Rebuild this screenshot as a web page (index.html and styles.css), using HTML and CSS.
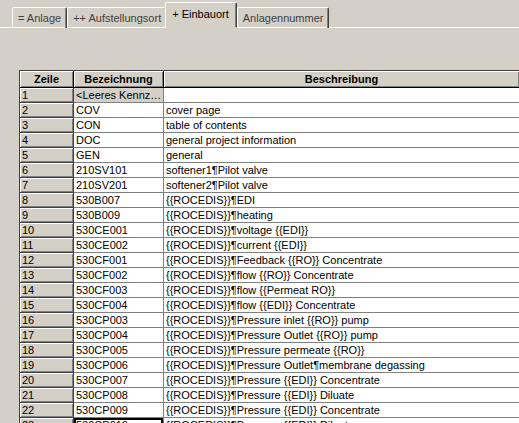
FILE: index.html
```html
<!DOCTYPE html>
<html lang="de">
<head>
  <meta charset="UTF-8">
  <title>Einbauort</title>
  <link rel="stylesheet" href="styles.css">
</head>
<body>

  <div class="tabs">
    <div class="tab">= Anlage</div>
    <div class="tab">++ Aufstellungsort</div>
    <div class="tab active">+ Einbauort</div>
    <div class="tab">Anlagennummer</div>
  </div>

  <div class="panel">
    <table class="grid">
      <colgroup>
        <col class="c-num">
        <col class="c-code">
        <col class="c-desc">
      </colgroup>
      <thead>
        <tr>
          <th>Zeile</th>
          <th>Bezeichnung</th>
          <th>Beschreibung</th>
        </tr>
      </thead>
      <tbody>
        <tr><td class="num">1</td><td class="empty">&lt;Leeres Kennz…</td><td></td></tr>
        <tr><td class="num">2</td><td>COV</td><td>cover page</td></tr>
        <tr><td class="num">3</td><td>CON</td><td>table of contents</td></tr>
        <tr><td class="num">4</td><td>DOC</td><td>general project information</td></tr>
        <tr><td class="num">5</td><td>GEN</td><td>general</td></tr>
        <tr><td class="num">6</td><td>210SV101</td><td>softener1¶Pilot valve</td></tr>
        <tr><td class="num">7</td><td>210SV201</td><td>softener2¶Pilot valve</td></tr>
        <tr><td class="num">8</td><td>530B007</td><td>{{ROCEDIS}}¶EDI</td></tr>
        <tr><td class="num">9</td><td>530B009</td><td>{{ROCEDIS}}¶heating</td></tr>
        <tr><td class="num">10</td><td>530CE001</td><td>{{ROCEDIS}}¶voltage {{EDI}}</td></tr>
        <tr><td class="num">11</td><td>530CE002</td><td>{{ROCEDIS}}¶current {{EDI}}</td></tr>
        <tr><td class="num">12</td><td>530CF001</td><td>{{ROCEDIS}}¶Feedback {{RO}} Concentrate</td></tr>
        <tr><td class="num">13</td><td>530CF002</td><td>{{ROCEDIS}}¶flow {{RO}} Concentrate</td></tr>
        <tr><td class="num">14</td><td>530CF003</td><td>{{ROCEDIS}}¶flow {{Permeat RO}}</td></tr>
        <tr><td class="num">15</td><td>530CF004</td><td>{{ROCEDIS}}¶flow {{EDI}} Concentrate</td></tr>
        <tr><td class="num">16</td><td>530CP003</td><td>{{ROCEDIS}}¶Pressure inlet {{RO}} pump</td></tr>
        <tr><td class="num">17</td><td>530CP004</td><td>{{ROCEDIS}}¶Pressure Outlet {{RO}} pump</td></tr>
        <tr><td class="num">18</td><td>530CP005</td><td>{{ROCEDIS}}¶Pressure permeate {{RO}}</td></tr>
        <tr><td class="num">19</td><td>530CP006</td><td>{{ROCEDIS}}¶Pressure Outlet¶membrane degassing</td></tr>
        <tr><td class="num">20</td><td>530CP007</td><td>{{ROCEDIS}}¶Pressure {{EDI}} Concentrate</td></tr>
        <tr><td class="num">21</td><td>530CP008</td><td>{{ROCEDIS}}¶Pressure {{EDI}} Diluate</td></tr>
        <tr><td class="num">22</td><td>530CP009</td><td>{{ROCEDIS}}¶Pressure {{EDI}} Concentrate</td></tr>
        <tr><td class="num">23</td><td class="current">530CP010</td><td>{{ROCEDIS}}¶Pressure {{EDI}} Diluate</td></tr>
      </tbody>
    </table>
  </div>

</body>
</html>
```

FILE: styles.css
```css
html, body {
  margin: 0;
  height: 100%;
  overflow: hidden;
}
body {
  background-color: #d4d0c8;
  font-family: "Liberation Sans", Arial, sans-serif;
  font-size: 11px;
  color: #000;
}

/* tab strip */
.tabs {
  display: flex;
  align-items: flex-end;
  height: 27px;
  padding-left: 12px;
  border-bottom: 1px solid #fff;
}
.tab {
  height: 20px;
  line-height: 20px;
  padding: 0 5px 0 5px;
  margin-bottom: -1px;
  border-top: 1px solid #fff;
  border-left: 1px solid #fff;
  border-right: 1px solid #404040;
  box-shadow: inset -1px 0 #808080;
  border-radius: 2px 2px 0 0;
  color: #404040;
  white-space: nowrap;
}
.tab.active {
  height: 24px;
  line-height: 22px;
  padding: 0 7px 0 6px;
  margin: 0 -1px -1px -2px;
  border-bottom: 1px solid #d4d0c8;
  background-color: #d4d0c8;
  color: #000;
  position: relative;
  z-index: 1;
}
.tab.active + .tab {
  margin-left: 1px;
}

/* grid */
.panel {
  padding: 42px 0 0 19px;
}
.grid {
  border-collapse: separate;
  border-spacing: 0;
  table-layout: fixed;
  width: 500px;
  border-top: 1px solid #404040;
  border-left: 1px solid #404040;
  background-color: #fff;
}
.c-num { width: 54px; }
.c-code { width: 90px; }
.c-desc { width: 356px; }

.grid th {
  height: 16px;
  padding: 0;
  background-color: #d4d0c8;
  font-weight: bold;
  text-align: center;
  border-right: 1px solid #000;
  border-bottom: 1px solid #000;
  box-shadow: inset 1px 1px #fff, inset -1px -1px #808080;
}
.grid td {
  height: 14px;
  line-height: 14px;
  padding: 0 0 0 2px;
  border-right: 1px solid #808080;
  border-bottom: 1px solid #808080;
  white-space: nowrap;
  overflow: hidden;
}
.grid td.num {
  background-color: #d4d0c8;
  border-right-color: #404040;
  border-bottom-color: #404040;
  box-shadow: inset 1px 1px #fff, inset -1px -1px #808080;
}
.grid td.empty {
  background-color: #d4d0c8;
}
.grid td.current {
  box-shadow: inset 0 0 0 2px #000;
}
```
